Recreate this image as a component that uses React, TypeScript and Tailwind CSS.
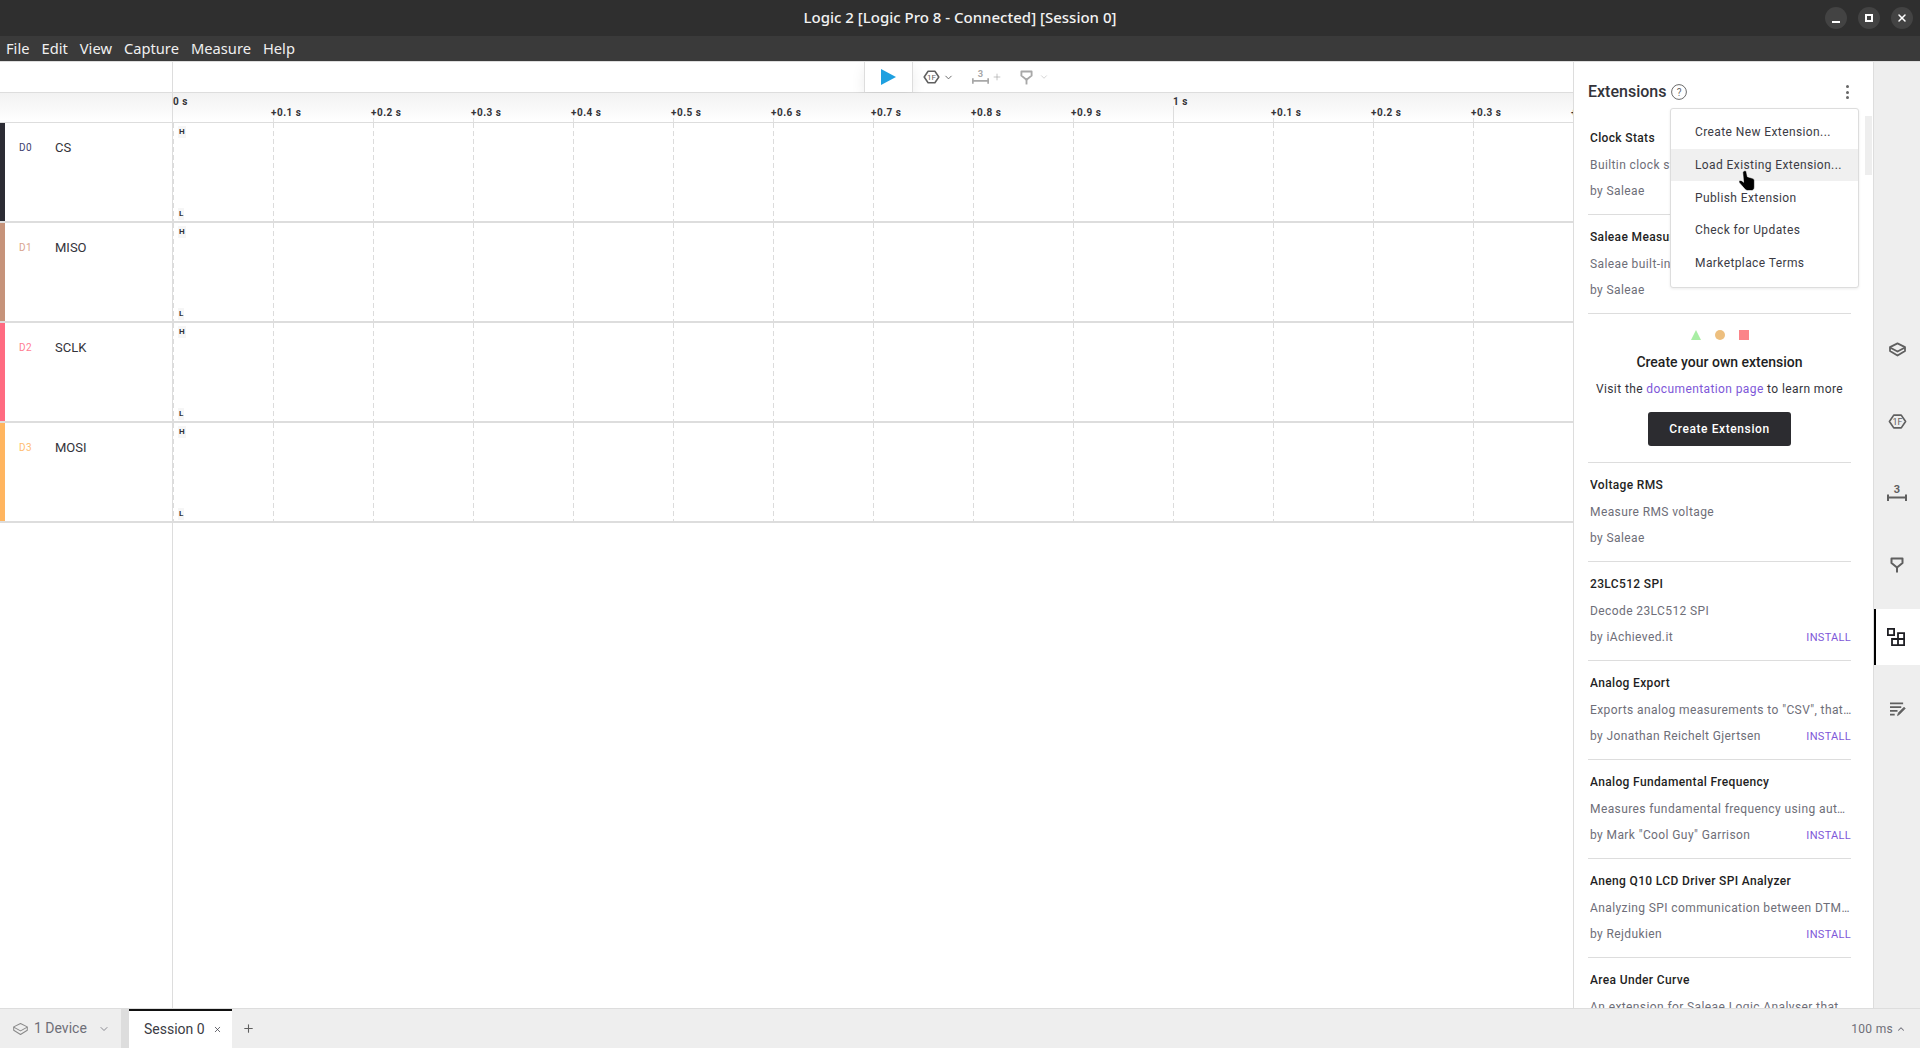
import { ChevronDown, ChevronUp, Plus, X } from 'lucide-react';

const channels = [
  { id: 'D0', name: 'CS', bar: 'bg-[#2c2c34]', text: 'text-[#3e3e6e]' },
  { id: 'D1', name: 'MISO', bar: 'bg-[#c6937a]', text: 'text-[#d9a48e]' },
  { id: 'D2', name: 'SCLK', bar: 'bg-[#ff6b81]', text: 'text-[#ff7d92]' },
  { id: 'D3', name: 'MOSI', bar: 'bg-[#ffb55f]', text: 'text-[#ffbd70]' },
];

const ticks = ['0 s', '+0.1 s', '+0.2 s', '+0.3 s', '+0.4 s', '+0.5 s', '+0.6 s', '+0.7 s', '+0.8 s', '+0.9 s', '1 s', '+0.1 s', '+0.2 s', '+0.3 s', '+0.4 s'];

const topExtensions = [
  { title: 'Clock Stats', desc: 'Builtin clock stats', by: 'by Saleae' },
  { title: 'Saleae Measurements', desc: 'Saleae built-in measurements', by: 'by Saleae' },
];

const extensions = [
  { title: 'Voltage RMS', desc: 'Measure RMS voltage', by: 'by Saleae' },
  { title: '23LC512 SPI', desc: 'Decode 23LC512 SPI', by: 'by iAchieved.it', install: true },
  { title: 'Analog Export', desc: 'Exports analog measurements to "CSV", that can be imported anywhere', by: 'by Jonathan Reichelt Gjertsen', install: true },
  { title: 'Analog Fundamental Frequency', desc: 'Measures fundamental frequency using autocorrelation', by: 'by Mark "Cool Guy" Garrison', install: true },
  { title: 'Aneng Q10 LCD Driver SPI Analyzer', desc: 'Analyzing SPI communication between DTM0660 and display', by: 'by Rejdukien', install: true },
  { title: 'Area Under Curve', desc: 'An extension for Saleae Logic Analyser that', by: '' },
];

const menuItems = ['Create New Extension...', 'Load Existing Extension...', 'Publish Extension', 'Check for Updates', 'Marketplace Terms'];

function DeviceIcon({ className, weight = 1.9 }: { className?: string; weight?: number }) {
  return (
    <svg viewBox="0 0 20 16" className={className} fill="none" stroke="currentColor" strokeWidth={weight} strokeLinejoin="round">
      <path d="M10 1.5 18 5.5 18 9.5 10 14.5 2 9.5 2 5.5Z" />
      <path d="M2 5.8 10 10.2 18 5.8" />
    </svg>
  );
}

function TimingIcon({ className }: { className?: string }) {
  return (
    <svg viewBox="0 0 20 16" className={className} fill="none" stroke="currentColor">
      <path d="M6 1.2H14L18.6 8 14 14.8H6L1.4 8Z" strokeWidth="1.8" strokeLinejoin="round" />
      <text x="10" y="11.4" textAnchor="middle" fontSize="9.5" fontFamily="Roboto, sans-serif" fill="currentColor" stroke="none">1F</text>
    </svg>
  );
}

function MeasureIcon({ className }: { className?: string }) {
  return (
    <svg viewBox="0 0 20 18" className={className} fill="none" stroke="currentColor">
      <text x="10" y="9" textAnchor="middle" fontSize="11" fontWeight="700" fontFamily="Roboto, sans-serif" fill="currentColor" stroke="none">3</text>
      <path d="M1 10.5V17M19 10.5V17M1 13.5H19" strokeWidth="2" />
    </svg>
  );
}

function PinIcon({ className }: { className?: string }) {
  return (
    <svg viewBox="0 0 14 16" className={className} fill="none" stroke="currentColor" strokeWidth="2">
      <path d="M1.5 1.5H12.5V6L7 10.5 1.5 6Z" strokeLinejoin="round" />
      <path d="M7 10V15.5" />
    </svg>
  );
}

function ExtensionsIcon({ className }: { className?: string }) {
  return (
    <svg viewBox="0 0 18 18" className={className} fill="none" stroke="currentColor" strokeWidth="1.8">
      <rect x="0.9" y="0.9" width="6.2" height="6.2" />
      <path d="M11 11V5.2H17.1V17.1H5V11H17.1M11 11V17.1" />
    </svg>
  );
}

function NotesIcon({ className }: { className?: string }) {
  return (
    <svg viewBox="0 0 18 16" className={className} fill="none" stroke="currentColor" strokeWidth="1.8">
      <path d="M1 1.5H15M1 5.5H13M1 9.5H9M1 13.5H6" />
      <path d="M9 14.5 10 11.5 16 5.5 17.2 7 11 13.2Z" fill="currentColor" strokeWidth="0.8" />
    </svg>
  );
}

function HandCursor() {
  return (
    <svg viewBox="0 0 18 22" className="absolute left-[67px] top-[60px] w-[18px] h-[23px]">
      <path
        d="M6 1.5C7 .8 8.2 1.3 8.5 2.4L9.4 7.2 14.6 8.8C15.8 9.2 16.4 10 16.4 11.2V17.5C16.4 19.6 15.4 21 13.5 21H9.5C8.3 21 7.5 20.5 6.8 19.6L1.3 13.2C.6 12.3 1 11.2 2 11 3.2 10.7 4.2 11.5 5.6 12.8L4.8 3.4C4.7 2.6 5.2 1.9 6 1.5Z"
        fill="#000"
        stroke="#fff"
        strokeWidth="0.6"
      />
    </svg>
  );
}

function ExtensionRow({ title, desc, by, install }: { title: string; desc: string; by: string; install?: boolean }) {
  return (
    <div className="h-[99px] shrink-0 border-b border-[#dddddd] pt-[13px] pl-[2px]">
      <div className="h-[18px] leading-[18px] text-[12px] font-medium tracking-[0.35px] text-[#1f1f24] truncate">{title}</div>
      <div className="mt-[9px] -mr-[1px] h-[18px] leading-[18px] text-[12px] tracking-[0.4px] text-[#6e6e78] truncate">{desc}</div>
      <div className="mt-[8px] h-[18px] leading-[18px] flex justify-between text-[12px] tracking-[0.4px] text-[#6e6e78]">
        <span>{by}</span>
        {install && <span className="pt-[1px] text-[11px] tracking-[0.3px] text-[#7e57d8]">INSTALL</span>}
      </div>
    </div>
  );
}

export default function App() {
  return (
    <div className="h-screen w-full flex flex-col overflow-hidden bg-white font-['Roboto',sans-serif]">
      <div className="relative h-[36px] shrink-0 bg-[#2f2f2f] flex items-center justify-center pb-[1px]">
        <span className="text-[15px] font-['Noto_Sans',sans-serif] font-medium text-[#f2f2f2]">Logic 2 [Logic Pro 8 - Connected] [Session 0]</span>
        <div className="absolute right-[7px] top-[7px] flex gap-[11px]">
          <div className="w-[22px] h-[22px] rounded-full bg-[#434343] flex items-end justify-center pb-[6px]">
            <div className="w-[8px] h-[2px] bg-white" />
          </div>
          <div className="w-[22px] h-[22px] rounded-full bg-[#434343] flex items-center justify-center">
            <div className="w-[8px] h-[8px] border-2 border-white" />
          </div>
          <div className="w-[22px] h-[22px] rounded-full bg-[#434343] flex items-center justify-center">
            <X className="w-[12px] h-[12px] text-white" strokeWidth={3} />
          </div>
        </div>
      </div>

      <div className="h-[26px] shrink-0 bg-[#3a3a3a] border-b border-[#dddddd] pl-[6px] flex items-center gap-[12px] text-[14.7px] font-['Noto_Sans',sans-serif] text-[#f0f0f0]">
        <span>File</span>
        <span>Edit</span>
        <span>View</span>
        <span>Capture</span>
        <span>Measure</span>
        <span>Help</span>
      </div>

      <div className="flex-1 flex min-h-0">
        <div className="flex-1 min-w-0 flex flex-col overflow-hidden">
          <div className="h-[31px] shrink-0 flex border-b border-[#dddddd]">
            <div className="w-[173px] shrink-0 border-r border-[#dddddd]" />
            <div className="ml-[691px] w-[49px] border-x border-[#dddddd] flex items-center justify-center shadow-[0_6px_14px_rgba(0,0,0,0.08)]">
              <svg viewBox="0 0 15 16" className="w-[15px] h-[16px]">
                <path d="M0 0 15 8 0 16Z" fill="#1ea0e0" />
              </svg>
            </div>
            <div className="ml-[10px] flex items-center text-[#5f5f5f]">
              <TimingIcon className="w-[17px] h-[14px]" />
              <ChevronDown className="ml-[3px] w-[11px] h-[11px]" strokeWidth={2} />
            </div>
            <div className="ml-[18px] flex items-center text-[#a8a8a8]">
              <MeasureIcon className="w-[17px] h-[16px]" />
              <Plus className="ml-[3px] w-[10px] h-[10px]" strokeWidth={1.6} />
            </div>
            <div className="ml-[18px] flex items-center text-[#a8a8a8]">
              <PinIcon className="w-[13px] h-[15px]" />
              <ChevronDown className="ml-[6px] w-[10px] h-[10px] text-[#cccccc]" strokeWidth={2} />
            </div>
          </div>

          <div className="h-[30px] shrink-0 flex border-b border-[#dddddd] bg-gradient-to-b from-[#f2f2f2] to-white">
            <div className="w-[173px] shrink-0 border-r border-[#dddddd]" />
            {ticks.map((t, i) => {
              const major = i === 0 || i === 10;
              return (
                <div key={i} className="relative w-[100px] shrink-0">
                  {i === 10 && <div className="absolute left-0 top-[13px] bottom-0 w-[1px] bg-[#dddddd]" />}
                  {!major && <div className="absolute left-0 top-[25px] bottom-0 w-[1px] bg-[#e2e2e2]" />}
                  <span className={major ? 'absolute left-0 top-[2px] text-[10px] leading-[14px] font-bold tracking-[0.5px] text-[#333338]' : 'absolute -left-[2px] top-[13px] text-[10px] leading-[14px] font-bold tracking-[0.5px] text-[#333338]'}>
                    {t}
                  </span>
                </div>
              );
            })}
          </div>

          {channels.map((c) => (
            <div key={c.id} className="h-[100px] shrink-0 flex border-b-2 border-[#dddddd]">
              <div className={`w-[5px] shrink-0 ${c.bar}`} />
              <div className="relative w-[168px] shrink-0 border-r border-[#dddddd] flex items-start pt-[17px]">
                <span className={`pl-[14px] box-content shrink-0 w-[21px] text-[10px] leading-[16px] tracking-[0.4px] ${c.text}`}>{c.id}</span>
                <span className="ml-[15px] text-[13px] leading-[16px] text-[#33333a]">{c.name}</span>
              </div>
              {ticks.map((_, i) => (
                <div key={i} className="relative w-[100px] shrink-0 bg-[linear-gradient(#dcdcdc_62%,transparent_62%)] bg-[length:1px_8px] bg-repeat-y">
                  {i === 0 && (
                    <>
                      <span className="absolute left-[5px] top-[3px] px-[1px] bg-[#f6f6f6] text-[8px] leading-[12px] font-bold text-[#333338]">H</span>
                      <span className="absolute left-[5px] bottom-[1px] px-[1px] bg-[#f6f6f6] text-[8px] leading-[12px] font-bold text-[#333338]">L</span>
                    </>
                  )}
                </div>
              ))}
            </div>
          ))}

          <div className="flex-1 flex">
            <div className="w-[173px] shrink-0 border-r border-[#dddddd]" />
          </div>
        </div>

        <div className="relative w-[300px] shrink-0 border-l border-[#dddddd] flex flex-col overflow-hidden">
          <div className="h-[54px] shrink-0 pl-[14px] flex items-start pt-[21px]">
            <span className="text-[16px] leading-[18px] font-medium text-[#33333a]">Extensions</span>
            <svg viewBox="0 0 16 16" className="ml-[5px] mt-[1px] w-[16px] h-[16px]" fill="none" stroke="#6a6a6a" strokeWidth="1">
              <circle cx="8" cy="8" r="7.4" />
              <text x="8" y="11.5" textAnchor="middle" fontSize="10" fontFamily="Roboto, sans-serif" fill="#6a6a6a" stroke="none">?</text>
            </svg>
            <div className="absolute left-[272px] top-[23px] flex flex-col gap-[2.5px]">
              <div className="w-[3px] h-[3px] rounded-full bg-[#666666]" />
              <div className="w-[3px] h-[3px] rounded-full bg-[#666666]" />
              <div className="w-[3px] h-[3px] rounded-full bg-[#666666]" />
            </div>
          </div>

          <div className="mx-[14px] w-[263px] flex flex-col">
            {topExtensions.map((e) => (
              <ExtensionRow key={e.title} {...e} />
            ))}
            <div className="h-[149px] shrink-0 border-b border-[#dddddd] flex flex-col items-center">
              <div className="mt-[16px] flex items-center gap-[14px]">
                <div className="w-0 h-0 border-l-[5px] border-r-[5px] border-b-[10px] border-l-transparent border-r-transparent border-b-[#a8eea4]" />
                <div className="w-[10px] h-[10px] rounded-full bg-[#edbf7f]" />
                <div className="w-[10px] h-[10px] bg-[#fb8489]" />
              </div>
              <div className="mt-[12px] h-[20px] leading-[20px] text-[14px] font-medium text-[#1f1f24]">Create your own extension</div>
              <div className="mt-[8px] h-[18px] leading-[18px] text-[12px] tracking-[0.4px] text-[#33333a]">
                Visit the <span className="text-[#7e57d8]">documentation page</span> to learn more
              </div>
              <div className="mt-[14px] w-[143px] h-[34px] rounded-[3px] bg-[#2c2c30] flex items-center justify-center text-[12px] font-medium tracking-[0.6px] text-white">
                Create Extension
              </div>
            </div>
            {extensions.map((e) => (
              <ExtensionRow key={e.title} {...e} />
            ))}
          </div>

          <div className="absolute left-[291px] top-[54px] w-[7px] h-[59px] bg-[#eeeeee]" />

          <div className="absolute left-[96px] top-[46px] w-[189px] h-[180px] bg-white border border-[#dddddd] rounded-[3px] shadow-[0_1px_3px_rgba(0,0,0,0.08)] pt-[7px]">
            {menuItems.map((m, i) => (
              <div key={m} className={i === 1 ? 'h-[32.7px] pl-[24px] flex items-center bg-[#f0f0f0] text-[12px] tracking-[0.4px] text-[#3b3b44]' : 'h-[32.7px] pl-[24px] flex items-center text-[12px] tracking-[0.4px] text-[#3b3b44]'}>
                {m}
              </div>
            ))}
            <HandCursor />
          </div>
        </div>

        <div className="w-[47px] shrink-0 bg-[#eeeeee] border-l border-[#dddddd] pt-[259px] flex flex-col gap-[16px]">
          <div className="h-[56px] flex items-center justify-center text-[#5f5f5f]"><DeviceIcon className="w-[19px] h-[15px]" /></div>
          <div className="h-[56px] flex items-center justify-center text-[#5f5f5f]"><TimingIcon className="w-[19px] h-[15px]" /></div>
          <div className="h-[56px] flex items-center justify-center text-[#5f5f5f]"><MeasureIcon className="w-[20px] h-[18px]" /></div>
          <div className="h-[56px] flex items-center justify-center text-[#5f5f5f]"><PinIcon className="w-[14px] h-[16px]" /></div>
          <div className="h-[56px] bg-white border-l-2 border-black flex items-center justify-center pr-[4px] text-[#1f1f24]"><ExtensionsIcon className="w-[18px] h-[18px]" /></div>
          <div className="h-[56px] flex items-center justify-center text-[#5f5f5f]"><NotesIcon className="w-[17px] h-[15px]" /></div>
        </div>
      </div>

      <div className="h-[40px] shrink-0 bg-[#eeeeee] border-t border-[#dddddd] flex items-stretch">
        <div className="w-[121px] shrink-0 flex items-center pl-[12px] text-[#6e6e78]">
          <DeviceIcon className="w-[17px] h-[14px] text-[#8a8a8a]" weight={1.2} />
          <span className="ml-[5px] text-[14px]">1 Device</span>
          <ChevronDown className="ml-[11px] w-[12px] h-[12px]" strokeWidth={1.6} />
        </div>
        <div className="w-[8px] shrink-0 bg-[#dddddd]" />
        <div className="w-[103px] shrink-0 bg-white border-t-2 border-[#111111] flex items-center pl-[15px] text-[#3b3b44]">
          <span className="text-[14px]">Session 0</span>
          <X className="ml-[8px] w-[9px] h-[9px]" strokeWidth={2} />
        </div>
        <div className="ml-[10px] flex items-center text-[#5f5f5f]">
          <Plus className="w-[13px] h-[13px]" strokeWidth={2} />
        </div>
        <div className="ml-auto pr-[14px] flex items-center text-[12px] tracking-[0.3px] text-[#6e6e78]">
          <span>100 ms</span>
          <ChevronUp className="ml-[3px] w-[10px] h-[10px]" strokeWidth={2.5} />
        </div>
      </div>
    </div>
  );
}
